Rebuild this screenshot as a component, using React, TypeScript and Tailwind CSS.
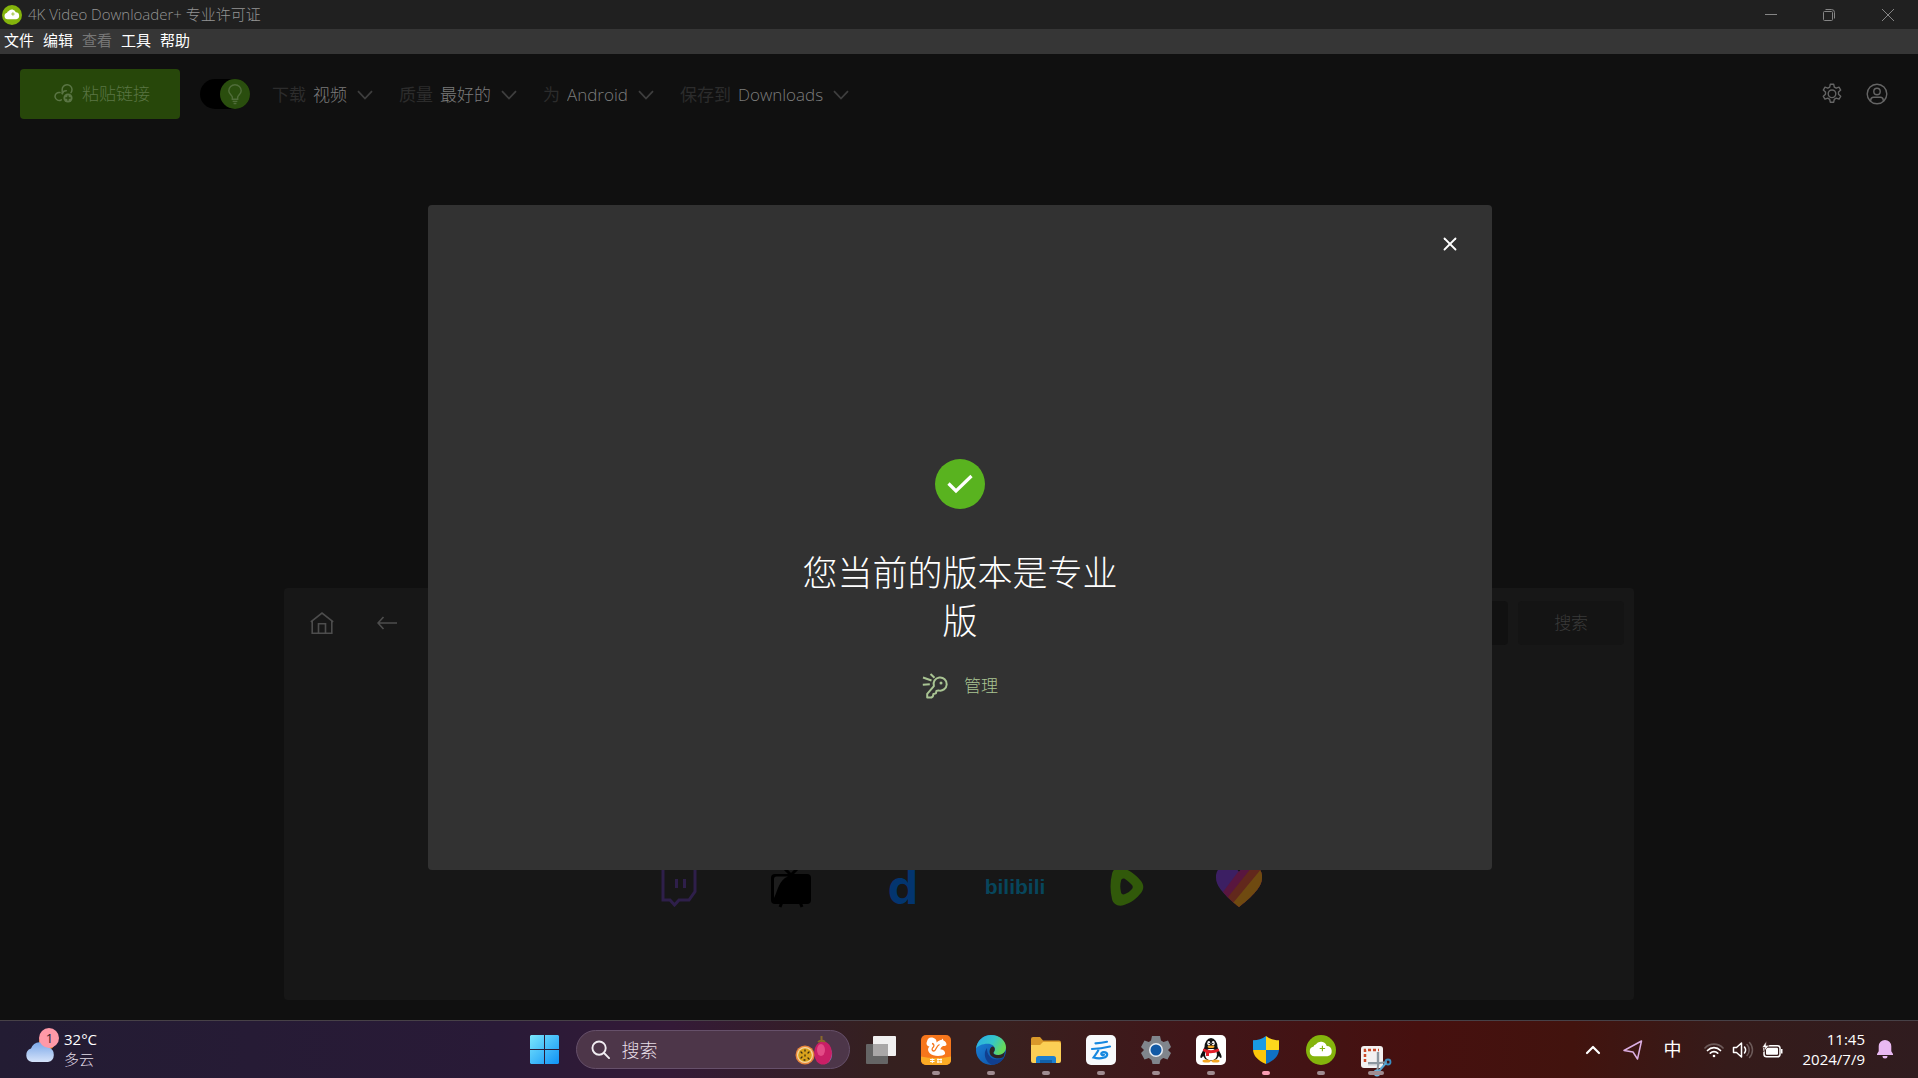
import { useState, type ReactNode } from "react";
import { ChevronUp, X } from "lucide-react";

const ui = "font-['Open_Sans','Noto_Sans_CJK_SC',sans-serif]";

function CloudLogo({ className }: { className: string }) {
  return (
    <svg viewBox="0 0 30 30" className={className} aria-hidden="true">
      <circle cx="15" cy="15" r="15" fill="#84b40c" />
      <path d="M8.5 21.3a4.9 4.9 0 0 1-.8-9.7 2.2 2.2 0 0 1 2-2.2 6.2 6.2 0 0 1 11 1.6 5.2 5.2 0 0 1 .8 10.3z" fill="#fff" />
      <path d="M16.4 10.8v5.4M13.7 13.5h5.4" stroke="#84b40c" strokeWidth="1.1" fill="none" />
    </svg>
  );
}

function TitleBar() {
  return (
    <header className="flex h-[29px] shrink-0 items-center bg-[#202020] pl-0.5">
      <CloudLogo className="size-5" />
      <h1 className="ml-1.5 flex-1 pb-0.5 text-[15px] font-light leading-5 text-[#949494]">4K Video Downloader+ 专业许可证</h1>
      <div className="flex h-full text-[#858585]">
        <button aria-label="最小化" className="grid w-[58px] place-items-center">
          <svg viewBox="0 0 12 12" className="size-3"><path d="M0 5.5h12" stroke="currentColor" /></svg>
        </button>
        <button aria-label="还原" className="grid w-[58px] place-items-center">
          <svg viewBox="0 0 12 12" className="size-3" fill="none" stroke="currentColor">
            <rect x=".5" y="2.5" width="9" height="9" rx="1" />
            <path d="M2.5 .5h6a3 3 0 0 1 3 3v6" />
          </svg>
        </button>
        <button aria-label="关闭" className="grid w-[60px] place-items-center">
          <svg viewBox="0 0 12 12" className="size-3"><path d="M0 0l12 12M12 0L0 12" stroke="currentColor" /></svg>
        </button>
      </div>
    </header>
  );
}

function MenuBar() {
  return (
    <nav className="flex h-[25px] shrink-0 items-center gap-[9px] bg-[#363636] pb-1 pl-1 text-[15px] leading-5 text-white">
      <button>文件</button>
      <button>编辑</button>
      <button disabled className="text-[#767676]">查看</button>
      <button>工具</button>
      <button>帮助</button>
    </nav>
  );
}

function Picker({ id, label, value }: { id: string; label: string; value: string }) {
  return (
    <div className="flex items-center pt-0.5 text-[17px] leading-6">
      <label htmlFor={id} className="text-[#2c2c2c]">{label}</label>
      <select id={id} className="ml-[7px] appearance-none bg-transparent font-light text-[#7c7c7c] [field-sizing:content]">
        <option>{value}</option>
      </select>
      <svg viewBox="0 0 16 10" className="ml-2.5 h-2.5 w-4" fill="none" stroke="#3e3e3e" strokeWidth="1.8" aria-hidden="true">
        <path d="M1 1.200L8 8.500l7-7.300" />
      </svg>
    </div>
  );
}

function Toolbar() {
  const [smart, setSmart] = useState(true);
  return (
    <div className="flex h-20 shrink-0 items-center px-5">
      <button className="flex h-[50px] w-40 items-center justify-center gap-2 rounded-sm bg-[#27470a] pl-1 text-[17px] font-light text-[#5a7544]">
        <svg viewBox="0 0 20 20" className="size-5" fill="none" stroke="currentColor" strokeWidth="1.5" strokeLinecap="round">
          <path d="M8.2 9.6V5.9A4.9 4.9 0 0 1 18 5.4c0 1.400-.3 2.200-1 3.200" />
          <path d="M6 8.600a4 4 0 1 0 1.300 7.200M8.300 9.700a4 4 0 0 1 4-2.900" />
          <circle cx="14" cy="14" r="4.600" fill="currentColor" stroke="none" />
          <path d="M14 11.800v4.400M11.800 14h4.400" stroke="#27470a" strokeWidth="1.300" />
        </svg>
        粘贴链接
      </button>
      <label className="ml-5 flex h-[30px] w-[50px] cursor-pointer justify-end rounded-full bg-black">
        <input type="checkbox" role="switch" aria-label="智能模式" checked={smart} onChange={() => setSmart(!smart)} className="sr-only" />
        <span className="grid size-[30px] place-items-center rounded-full bg-[#2a4e0e] text-[#506d3a]">
          <svg viewBox="0 0 16 22" className="h-[21px] w-4" fill="none" stroke="currentColor" strokeWidth="1.500">
            <path d="M5.200 16v-2.200C5 12 1.500 10.500 1.500 7a6.500 6.200 0 0 1 13 0c0 3.500-3.500 5-3.700 6.800V16zM5.500 18.200h5M6.500 20.500h3" />
          </svg>
        </span>
      </label>
      <div className="ml-[22px] flex flex-1 items-center gap-[26px]">
        <Picker id="kind" label="下载" value="视频" />
        <Picker id="quality" label="质量" value="最好的" />
        <Picker id="platform" label="为" value="Android" />
        <Picker id="folder" label="保存到" value="Downloads" />
      </div>
      <div className="flex gap-[23px] pr-2.5 text-[#656565]">
        <button aria-label="设置">
          <svg viewBox="0 0 22 22" className="size-[22px]" fill="none" stroke="currentColor" strokeWidth="1.400" strokeLinejoin="round">
            <path d="M9.300 1.200h3.400l.6 2.900 1.900 1.100 2.800-1 1.700 2.900-2.200 2v2.200l2.200 2-1.700 2.900-2.800-1-1.900 1.100-.6 2.900H9.300l-.6-2.900-1.900-1.100-2.800 1-1.700-2.900 2.200-2V9.100l-2.200-2L4 4.200l2.800 1 1.900-1.100z" />
            <circle cx="11" cy="10.800" r="3.800" />
          </svg>
        </button>
        <button aria-label="账户">
          <svg viewBox="0 0 22 22" className="size-[22px]" fill="none" stroke="currentColor" strokeWidth="1.400">
            <circle cx="11" cy="11" r="9.800" />
            <circle cx="11" cy="8.500" r="3.200" />
            <path d="M4.700 18.200v-1a3 3 0 0 1 3-2.900h6.600a3 3 0 0 1 3 2.900v1" />
          </svg>
        </button>
      </div>
    </div>
  );
}

function SiteLinks() {
  const cell = "grid h-11 w-[112px] place-items-center";
  return (
    <div className="flex justify-center">
      <a href="#twitch" aria-label="Twitch" className={cell}>
        <svg viewBox="0 0 36 40" className="h-10 w-9" fill="none" stroke="#2e1f4a" strokeWidth="3">
          <path d="M2 1.500h32v23l-6 8.500H18l-4.500 5-4.500-5H2zM15.500 12v9M23.500 12v9" />
        </svg>
      </a>
      <a href="#tv" aria-label="TV" className={cell}>
        <svg viewBox="0 0 42 42" className="size-[42px]">
          <path d="M14 2l7 7 7-7M12 36l-2 5M30 36l2 5" stroke="#000" strokeWidth="3" fill="none" />
          <rect x="1" y="8" width="40" height="30" rx="4" fill="#000" />
          <path d="M4 32V13a2.500 2.500 0 0 1 2.500-2.500H18C9 14 8 24 4 32z" fill="#1d1d1d" />
        </svg>
      </a>
      <a href="#dailymotion" aria-label="Dailymotion" className={cell}>
        <span className="font-['Inter'] text-[48px] font-bold leading-[44px] text-[#03356f]">d</span>
      </a>
      <a href="#bilibili" className={cell}>
        <span className="font-['Liberation_Sans'] text-[21px] font-bold leading-[44px] text-[#07465c]">bilibili</span>
      </a>
      <a href="#rumble" aria-label="Rumble" className={cell}>
        <svg viewBox="0 0 36 42" className="h-[42px] w-9">
          <path d="M3 8C4 3 9 0 14 2c8 3 14 8 18 13 3 4 3 8 0 12-4 5-10 10-17 12-6 2-11-1-12-6C1 25 1 16 3 8z" fill="#31590a" />
          <path d="M12 15c0-2 2-3 4-2 3 2 5 4 7 6 1 1 1 3 0 4-2 2-4 4-7 5-2 1-4 0-4-2-1-4-1-8 0-11z" fill="#171717" />
        </svg>
      </a>
      <a href="#likee" aria-label="Likee" className={cell}>
        <svg viewBox="0 0 46 42" className="h-[42px] w-[46px]">
          <defs>
            <clipPath id="heart"><path d="M23 41C13 33 0 22 0 12A12 12 0 0 1 23 6 12 12 0 0 1 46 12c0 10-13 21-23 29z" /></clipPath>
          </defs>
          <g clipPath="url(#heart)">
            <rect width="46" height="42" fill="#3c1f63" />
            <path d="M7 26L28-2h20v46H20z" fill="#59163f" />
            <path d="M12 31L40-4h8v48H22z" fill="#62281c" />
            <path d="M17 37L46 2v42H20z" fill="#6f4a10" />
          </g>
        </svg>
      </a>
    </div>
  );
}

function Browser() {
  return (
    <section aria-label="浏览器" className="mx-auto mt-auto mb-5 flex h-[412px] w-[70.400%] flex-col rounded-sm bg-[#171717]">
      <div className="flex h-[70px] items-center pl-[26px] pr-2.5 text-[#4d4d4d]">
        <button aria-label="主页">
          <svg viewBox="0 0 24 24" className="size-6" fill="none" stroke="currentColor" strokeWidth="1.600">
            <path d="M.8 10.800L12 2l11.200 8.800M2.200 9.800v12.400h19.600V9.800M8.500 22V12.800h7V22" />
          </svg>
        </button>
        <button aria-label="返回" className="ml-[43px]">
          <svg viewBox="0 0 20 14" className="h-3.5 w-5" fill="none" stroke="currentColor" strokeWidth="1.600">
            <path d="M20 7H1M6.500 1L1 7l5.500 6" />
          </svg>
        </button>
        <input aria-label="地址" className="ml-10 h-11 min-w-0 flex-1 rounded-sm bg-[#111111] px-3" />
        <button className="ml-2.5 h-11 w-[106px] rounded-sm bg-[#141414] text-[17px] font-light text-[#3a3a3a]">搜索</button>
      </div>
      <div className="mt-auto pb-[91px]"><SiteLinks /></div>
    </section>
  );
}

function LicenseDialog() {
  return (
    <div className="absolute inset-0 grid place-items-center pt-px pl-0.5">
      <div role="dialog" aria-labelledby="license-title" className="flex h-[69%] w-[55.500%] flex-col rounded bg-[#323232]">
        <div className="flex justify-end px-[31px] pt-7">
          <button aria-label="关闭" className="text-white"><X className="size-[22px]" strokeWidth={2} /></button>
        </div>
        <div className="flex flex-1 flex-col items-center justify-center pt-8 text-center">
          <div className="grid size-[50px] place-items-center rounded-full bg-[#59b31f] text-white">
            <svg viewBox="0 0 26 20" className="h-5 w-[26px]" fill="none" stroke="currentColor" strokeWidth="3.200">
              <path d="M1.500 9.500l7.500 7.500L24.500 2" />
            </svg>
          </div>
          <h2 id="license-title" className="mt-10 w-[340px] text-[35px] font-light leading-[48px] text-white">您当前的版本是专业版</h2>
          <button className="mt-7 flex items-center gap-4 text-[17px] font-light leading-6 text-[#a9c493]">
            <svg viewBox="0 0 26 26" className="size-[26px]" fill="none" stroke="currentColor" strokeWidth="2" strokeLinejoin="round">
              <path d="M11.900 13.200a6.600 6.600 0 1 1 4.500 4.200l-2 .6-.5 2.400-2.500.6-.5 2.400-1.600 1.200H5.200v-3.700z" />
              <circle cx="19" cy="10" r="1.500" fill="currentColor" stroke="none" />
              <path d="M8.500 1l4 3.800M1 4.500l8.500 3M.8 11.800l7-.6" />
            </svg>
            管理
          </button>
        </div>
      </div>
    </div>
  );
}

function TaskApp({ name, dot = "w-2 bg-[#a08c91]", children }: { name: string; dot?: string; children: ReactNode }) {
  return (
    <button aria-label={name} className="flex w-[55px] flex-col items-center pt-[14px]">
      {children}
      <span className={`mt-1.5 h-1 rounded-full ${dot}`} />
    </button>
  );
}

const icon = "size-[30px]";

function TaskApps() {
  return (
    <>
      <TaskApp name="UC">
        <svg viewBox="0 0 30 30" className={icon}>
          <defs><clipPath id="uc"><rect width="30" height="30" rx="5" /></clipPath></defs>
          <g clipPath="url(#uc)">
            <rect width="30" height="30" fill="#f6761c" />
            <path d="M0 21.500q15 3 30 0V30H0z" fill="#fbab25" />
          </g>
          <path d="M10 2.500c4 0 6 2.500 5.500 5 2-2 4-2.500 5-2.500l1-1.500 1 2c2 .8 3 2.500 3 4.500-.8 1-2 1-3.500 1-1.500 1-2.500 2-2.500 3.500 3 0 5 2 4.500 4.500-2 2.500-12 2.800-15-.5C6.500 16 6.500 13 8.500 11.500 5.500 11 5 8.500 6 6.500 6.500 4 8 2.500 10 2.500z" fill="#fff" />
          <path d="M11 8.500c2.500.5 2.500 3 .5 4.500-1 1.500 0 3 1.500 3 2.500-1 2-5 5.500-6.500" stroke="#f6761c" strokeWidth="1.300" fill="none" />
          <path d="M9 24.500h4.500M9 26.500h4.500M11.300 23.500V28M16 24.500h5M16 27h5M17 23.500V28M20 23.500V28" stroke="#fff" fill="none" />
        </svg>
      </TaskApp>
      <TaskApp name="Edge">
        <svg viewBox="0 0 30 30" className={icon}>
          <defs>
            <linearGradient id="e1" x1="0" y1="0" x2="1" y2=".4"><stop stopColor="#2aa9e8" /><stop offset=".6" stopColor="#35c6c8" /><stop offset="1" stopColor="#66d95b" /></linearGradient>
            <linearGradient id="e2" x1="0" y1="0" x2="1" y2="1"><stop stopColor="#1c86dc" /><stop offset="1" stopColor="#0c4a9e" /></linearGradient>
          </defs>
          <circle cx="15" cy="15" r="15" fill="url(#e2)" />
          <path d="M0 14C1 5 8 0 15 0c9 0 15 6 15 12.500 0 4.500-3.500 7.500-7.500 7.500-3 0-5-1-5-2.200 0-.8 1.300-1.200 1.300-3.600 0-3-3-5.400-7-5.400C6 8.800 1.500 11 0 14z" fill="url(#e1)" />
          <path d="M11 13c-4 5-2.500 13 4.500 16.800 5 .3 10-2.800 12.700-7.300-4 2.500-11 3-14.500-1.200-2-2.300-2.700-5.300-2.700-8.300z" fill="#113f8f" />
          <path d="M18.800 14c0 2.600-1.400 3-1.400 4 0 1.300 2.500 2.500 5.500 2 2.500-.3 4.500-1 6-3.500-.5 3-1 4.500-1.500 5.500-3 2-9 2-12.500-1.500-2.500-3.500-1-8 1.500-9 1.400.2 2.400 1.200 2.400 2.500z" fill="#2f2422" />
        </svg>
      </TaskApp>
      <TaskApp name="文件资源管理器">
        <svg viewBox="0 0 30 30" className={icon}>
          <path d="M0 4a2 2 0 0 1 2-2h7l3 3.500h16a2 2 0 0 1 2 2V14H0z" fill="#d9992a" />
          <path d="M0 10h9l3-3h16a2 2 0 0 1 2 2v17a2 2 0 0 1-2 2H2a2 2 0 0 1-2-2z" fill="#fbcf55" />
          <path d="M5 28v-4.500A2.500 2.500 0 0 1 7.500 21h15a2.500 2.500 0 0 1 2.500 2.500V28z" fill="#1b7fd0" />
          <path d="M9 28v-3h12v3z" fill="#1260a8" />
        </svg>
      </TaskApp>
      <TaskApp name="云">
        <svg viewBox="0 0 30 30" className={icon}>
          <rect width="30" height="30" rx="5" fill="#f8fafc" />
          <path d="M9.500 8.300q6-.3 11.500-1.500M6 14q9-.3 18-2.500M13 13.500c-1 3.500-3.500 6-5.500 9 5 1.500 12 1 13.500-2 1-3-3.500-4.500-5.500-2.500-1 1.500 1 2.500 2.500 1.800" fill="none" stroke="#1688e0" strokeWidth="2.200" strokeLinecap="round" />
        </svg>
      </TaskApp>
      <TaskApp name="设置">
        <svg viewBox="0 0 30 30" className={icon}>
          <path d="M11 1h8l1 4.500 2.500 1.400L27 5.500l3 6.500-3 3 3 3-3.500 6.500-4.300-1.400L19.500 25 18.500 29h-7l-1-4-2.700-1.900-4.300 1.400L0 18l3-3-3-3 3.500-6.500 4.300 1.400L10 5.500z" fill="#80858c" />
          <circle cx="15" cy="15" r="7" fill="#e9eef4" />
          <circle cx="15" cy="15" r="5.500" fill="#1259a5" />
        </svg>
      </TaskApp>
      <TaskApp name="QQ">
        <svg viewBox="0 0 30 30" className={icon}>
          <rect width="30" height="30" rx="5" fill="#fff" />
          <ellipse cx="15" cy="18" rx="8.500" ry="8" fill="#111" />
          <path d="M7 16c-3 4-3 7-2 7s2-2 2.500-3zM23 16c3 4 3 7 2 7s-2-2-2.500-3z" fill="#111" />
          <ellipse cx="15" cy="19.500" rx="6" ry="6" fill="#fff" />
          <ellipse cx="10.500" cy="26" rx="4" ry="1.500" fill="#f5a623" /><ellipse cx="19.500" cy="26" rx="4" ry="1.500" fill="#f5a623" />
          <path d="M8.500 12a6.500 9 0 0 1 13 0v2h-13z" fill="#111" />
          <ellipse cx="12.800" cy="8.300" rx="1.500" ry="2.200" fill="#fff" /><ellipse cx="17.200" cy="8.300" rx="1.500" ry="2.200" fill="#fff" />
          <circle cx="13.200" cy="8.500" r=".7" /><circle cx="16.800" cy="8.500" r=".7" />
          <ellipse cx="15" cy="11.800" rx="3.500" ry="1.200" fill="#f5a623" />
          <path d="M7.500 13.500q7.500 3.500 15 0l.8 2.500q-5 2.700-10.300 2.200V21h-3v-3.500l-3-1.500z" fill="#e3202b" />
        </svg>
      </TaskApp>
      <TaskApp name="安全" dot="w-2 bg-[#fb9db4]">
        <svg viewBox="0 0 30 30" className={icon}>
          <defs><clipPath id="sh"><path d="M15 1c4 3.200 8 4.300 13 4.300V14c0 7-5 11.500-13 15C7 25.500 2 21 2 14V5.300C7 5.300 11 4.200 15 1z" /></clipPath></defs>
          <g clipPath="url(#sh)">
            <path d="M0 0h15v15H0z" fill="#199be4" /><path d="M15 0h15v15H15z" fill="#fdd81c" />
            <path d="M0 15h15v15H0z" fill="#fcc60b" /><path d="M15 15h15v15H15z" fill="#0f72c4" />
          </g>
        </svg>
      </TaskApp>
      <TaskApp name="4K Video Downloader+"><CloudLogo className={icon} /></TaskApp>
      <TaskApp name="截图工具" dot="w-4 bg-[#a08c91]">
        <svg viewBox="0 0 30 30" className={`${icon} overflow-visible`}>
          <rect y="11" width="22" height="22" rx="3" fill="#f3f1f1" />
          <path d="M4 27V15h14" fill="none" stroke="#cc4a28" strokeWidth="2.500" strokeDasharray="3 2" />
          <path d="M7 29h12M17 17v12" stroke="#c9cdd2" strokeWidth="3" fill="none" />
          <path d="M17 17v14l-1 7M7 28h12l7-1" stroke="#8d979f" strokeWidth="2" fill="none" />
          <circle cx="27" cy="27" r="2.500" fill="none" stroke="#3b8fc2" strokeWidth="1.800" />
          <circle cx="16" cy="38" r="2.500" fill="none" stroke="#6bb5de" strokeWidth="1.800" />
          <path d="M18 36l7-8" stroke="#5aa6d2" strokeWidth="2" />
        </svg>
      </TaskApp>
    </>
  );
}

function Taskbar() {
  return (
    <footer className="grid h-[58px] shrink-0 grid-cols-[1fr_auto_1fr] border-t border-[#474147] bg-linear-[90deg,#231c33_0%,#291a37_26%,#341a37_35%,#35201f_46%,#38201f_52%,#401619_62%,#46100f_74%,#42130e_82%,#351b1a_90%,#301c1f_100%] pl-0.5 text-white">
      <button className="flex items-start gap-1 pt-1.5 pl-[22px] text-left">
        <svg viewBox="0 0 36 36" className="size-9">
          <defs><linearGradient id="cl" x1="0" y1="0" x2="0" y2="1"><stop stopColor="#7ba7e8" /><stop offset="1" stopColor="#d5e3fa" /></linearGradient></defs>
          <circle cx="23" cy="15" r="8" fill="#f28b2e" />
          <path d="M8 35a7 7 0 0 1-1-13.500 9.500 9.500 0 0 1 17.500-1A7.500 7.500 0 0 1 24 35z" fill="url(#cl)" />
          <circle cx="25" cy="11" r="10" fill="#ff99a8" />
          <text x="25.500" y="15.500" fontSize="13" textAnchor="middle" fill="#2a1d30">1</text>
        </svg>
        <span className="pt-0.5 text-[15px] leading-5">
          <span className="block">32°C</span>
          <span className="block font-light text-[#e2dce8]">多云</span>
        </span>
      </button>

      <div className="flex">
        <button aria-label="开始" className="grid w-[55px] place-items-center">
          <svg viewBox="0 0 29 29" className="size-[29px]">
            <defs><linearGradient id="win" x1="0" y1="0" x2="1" y2="1"><stop stopColor="#7be7fd" /><stop offset="1" stopColor="#0f92f5" /></linearGradient></defs>
            <path d="M1 0h13v14H0V1zM15 0h13l1 1v13H15zM0 15h14v14H1l-1-1zM15 15h14v13l-1 1H15z" fill="url(#win)" />
          </svg>
        </button>
        <label className="mx-1 my-[9px] flex w-[274px] items-center rounded-full border border-[#66506a] bg-[#4d3649] pr-4 pl-[14px]">
          <svg viewBox="0 0 20 20" className="size-[19px] shrink-0" fill="none" stroke="#f1edf2" strokeWidth="2" strokeLinecap="round">
            <circle cx="8.500" cy="8.500" r="7" /><path d="M13.700 13.700L19 19" />
          </svg>
          <input placeholder="搜索" aria-label="搜索" className="ml-3 min-w-0 flex-1 bg-transparent text-[18px] font-light leading-6 text-white placeholder:text-[#e6dee6]" />
          <svg viewBox="0 0 38 30" className="h-[30px] w-[38px] shrink-0">
            <path d="M31 8q7 6 6 13t-8 8z" fill="#7a84b4" />
            <ellipse cx="28" cy="18" rx="9" ry="11.500" fill="#c91f66" />
            <ellipse cx="26" cy="15" rx="4" ry="6" fill="#e34a86" />
            <path d="M26.500 1v6M23 7q4-3 7 0" stroke="#8a6a2a" strokeWidth="2" fill="none" />
            <circle cx="10" cy="20" r="9.500" fill="#e8863c" /><circle cx="10" cy="20" r="8" fill="#f5d9a0" /><circle cx="10" cy="20" r="6.800" fill="#d9a21c" />
            <path d="M6 17l1 1M10 15v1M14 17l-1 1M6 23l1-1M10 20v1M13 23l1 1M9 25h1" stroke="#3b2c12" strokeWidth="1.300" strokeLinecap="round" />
          </svg>
        </label>
        <button aria-label="任务视图" className="grid w-[55px] place-items-center">
          <svg viewBox="0 0 30 28" className="h-7 w-[30px]">
            <rect y="8" width="22" height="20" rx="1" fill="#656565" />
            <rect x="7" width="23" height="20" rx="1" fill="#f1f0f0" />
            <path d="M7 8h15v12H7z" fill="#a9a7a7" />
          </svg>
        </button>
        <TaskApps />
      </div>

      <div className="flex items-center justify-end pr-[25px]">
        <button aria-label="显示隐藏的图标"><ChevronUp className="size-6" strokeWidth={2.2} /></button>
        <button aria-label="定位" className="ml-[18px]">
          <svg viewBox="0 0 20 20" className="size-5" fill="none" stroke="#dcaee2" strokeWidth="1.500" strokeLinejoin="round">
            <path d="M18.500 1L1 10.500l9 1.500 4.500 7z" />
          </svg>
        </button>
        <button className="ml-[21px] pb-0.5 text-[18px] leading-6">中</button>
        <button aria-label="网络、音量和电源" className="ml-[22px] flex items-center gap-2">
          <svg viewBox="0 0 20 16" className="h-4 w-5" fill="none" stroke="#fff" strokeWidth="1.700" strokeLinecap="round">
            <path d="M1 6a12.500 12.500 0 0 1 18 0" stroke="#6c5a59" />
            <path d="M3.500 8.500a9 9 0 0 1 13 0M6.300 11.200a5.300 5.300 0 0 1 7.400 0" />
            <circle cx="10" cy="14" r="1.300" fill="#fff" stroke="none" />
          </svg>
          <svg viewBox="0 0 22 18" className="h-[18px] w-[22px]" fill="none" stroke="#fff" strokeWidth="1.500" strokeLinejoin="round" strokeLinecap="round">
            <path d="M1.500 6.500v5h3L9.500 16V2L4.500 6.500zM12.500 6a5 5 0 0 1 0 6" />
            <path d="M15 3.500a8 8 0 0 1 0 11M17.500 1.500a11 11 0 0 1 0 15" stroke="#6c5a59" />
          </svg>
          <svg viewBox="0 0 21 17" className="h-[17px] w-[21px]">
            <rect x="2" y="4.800" width="16" height="11" rx="2.500" fill="none" stroke="#fff" strokeWidth="1.500" />
            <rect x="4" y="6.800" width="12" height="7" rx="1" fill="#fff" />
            <path d="M19 8h1.500v4.500H19z" fill="#fff" />
            <path d="M4.500 0L0 6.500h3L1.500 11 7 4.500H4z" fill="#fff" stroke="#3a1a18" strokeWidth=".6" />
          </svg>
        </button>
        <button className="ml-5 pb-0.5 text-right text-[15px] leading-5">
          <span className="block">11:45</span>
          <span className="block">2024/7/9</span>
        </button>
        <button aria-label="通知" className="ml-3">
          <svg viewBox="0 0 16 19" className="h-[19px] w-4" fill="#e9b9f2">
            <path d="M8 0a6.300 6.300 0 0 1 6.300 6.300v5L16 14v1H0v-1l1.700-2.700v-5A6.300 6.300 0 0 1 8 0zM5.500 16h5a2.500 2.500 0 0 1-5 0z" />
          </svg>
        </button>
      </div>
    </footer>
  );
}

export default function App() {
  return (
    <div className={`flex min-h-screen flex-col bg-[#101010] ${ui}`}>
      <TitleBar />
      <MenuBar />
      <main className="relative flex flex-1 flex-col">
        <Toolbar />
        <Browser />
        <LicenseDialog />
      </main>
      <Taskbar />
    </div>
  );
}
